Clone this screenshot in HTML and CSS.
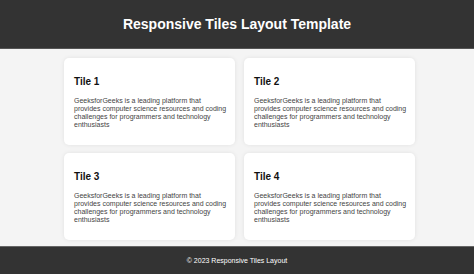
FILE: index.html
```html
<!DOCTYPE html>
<html lang="en">
<head>
<meta charset="utf-8">
<title>Responsive Tiles Layout Template</title>
<link rel="stylesheet" href="styles.css">
</head>
<body>
<header class="site-header">
  <h1 class="site-title">Responsive Tiles Layout Template</h1>
</header>
<main class="content">
  <div class="tiles">
    <div class="tile">
      <h2 class="tile-title">Tile 1</h2>
      <p class="tile-text">GeeksforGeeks is a leading platform that provides computer science resources and coding challenges for programmers and technology enthusiasts</p>
    </div>
    <div class="tile">
      <h2 class="tile-title">Tile 2</h2>
      <p class="tile-text">GeeksforGeeks is a leading platform that provides computer science resources and coding challenges for programmers and technology enthusiasts</p>
    </div>
    <div class="tile">
      <h2 class="tile-title">Tile 3</h2>
      <p class="tile-text">GeeksforGeeks is a leading platform that provides computer science resources and coding challenges for programmers and technology enthusiasts</p>
    </div>
    <div class="tile">
      <h2 class="tile-title">Tile 4</h2>
      <p class="tile-text">GeeksforGeeks is a leading platform that provides computer science resources and coding challenges for programmers and technology enthusiasts</p>
    </div>
  </div>
</main>
<footer class="site-footer">
  <p class="footer-text">© 2023 Responsive Tiles Layout</p>
</footer>
</body>
</html>
```
FILE: styles.css
```css
* { box-sizing: border-box; }
html, body { margin: 0; padding: 0; }
body {
  font-family: "Liberation Sans", Arial, sans-serif;
  background: #f4f4f4;
  width: 474px;
  height: 274px;
  display: flex;
  flex-direction: column;
}
.site-header {
  background: #333333;
  height: 49px;
  display: flex;
  align-items: center;
  justify-content: center;
  border-bottom: 1px solid #555;
}
.site-title {
  margin: 0;
  color: #ffffff;
  font-size: 14px;
  font-weight: bold;
}
.content {
  flex: 1;
  padding: 9px 0 0;
}
.tiles {
  width: 351px;
  margin: 0 0 0 64px;
  display: grid;
  grid-template-columns: 1fr 1fr;
  gap: 8px 9px;
}
.tile {
  background: #ffffff;
  border-radius: 5px;
  box-shadow: 0 0 4px rgba(0,0,0,0.08);
  height: 87px;
  padding: 18px 8px 10px 10px;
}
.tile-title {
  margin: 0 0 9px;
  font-size: 10px;
  font-weight: bold;
  color: #111;
  line-height: 12px;
}
.tile-text {
  margin: 0;
  font-size: 7px;
  line-height: 8px;
  color: #444;
}
.site-footer {
  background: #333333;
  height: 28px;
  display: flex;
  align-items: center;
  justify-content: center;
  border-top: 1px solid #666;
}
.footer-text {
  margin: 0;
  color: #ffffff;
  font-size: 7px;
}
```
